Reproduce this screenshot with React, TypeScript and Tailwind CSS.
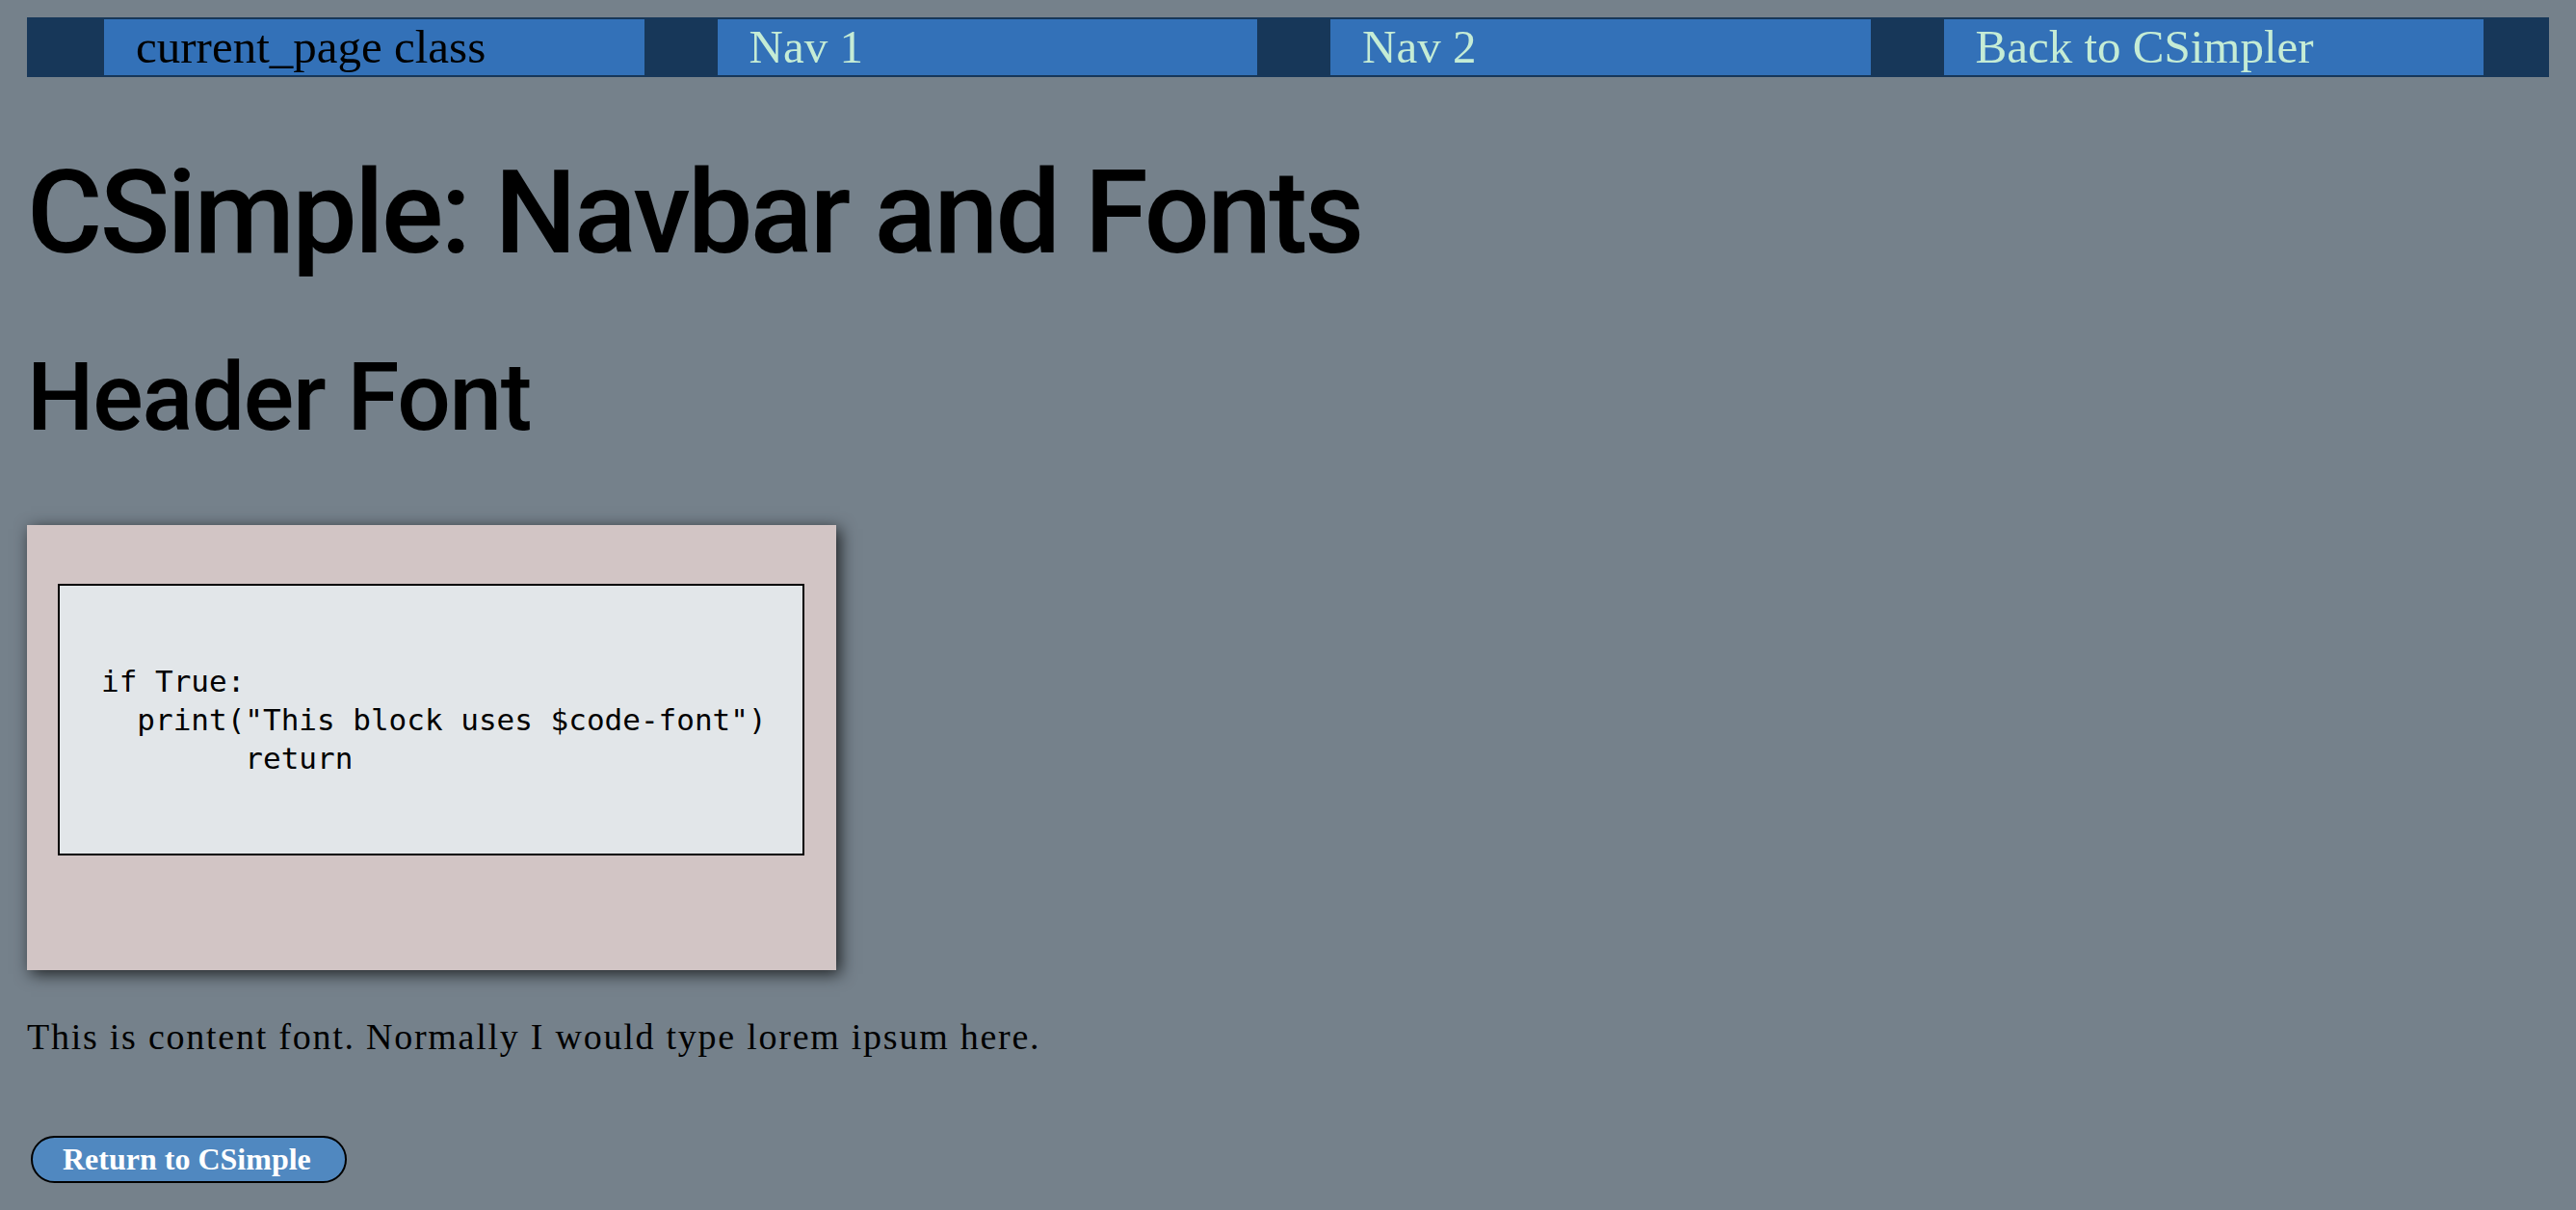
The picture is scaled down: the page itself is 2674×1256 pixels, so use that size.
const navItems = [
  { label: 'current_page class', current: true },
  { label: 'Nav 1', current: false },
  { label: 'Nav 2', current: false },
  { label: 'Back to CSimpler', current: false },
];

const code = `if True:
  print("This block uses $code-font")
        return`;

export default function App() {
  return (
    <div className="min-h-[1256px] bg-[#75818b] px-[28px] pt-[18px]">
      <nav className="flex gap-[76px] border-t-2 border-b-2 border-[#173759] bg-[#173759] pl-[80px] pr-[68px]">
        {navItems.map((item) => (
          <a
            key={item.label}
            href="#"
            className={`flex-1 bg-[#3371b8] pl-[33px] font-['Liberation_Serif',serif] text-[49px] leading-[58px] ${
              item.current ? 'text-black' : 'text-[#c5ecd5]'
            }`}
          >
            {item.label}
          </a>
        ))}
      </nav>

      <h1 className="mt-[71px] font-['Roboto',sans-serif] text-[120px] leading-[140px] font-medium tracking-[-2.7px] text-black">
        CSimple: Navbar and Fonts
      </h1>
      <h2 className="mt-[64px] font-['Roboto',sans-serif] text-[98px] leading-[115px] font-medium tracking-[-1.3px] text-black">
        Header Font
      </h2>

      <div className="mt-[75px] w-[840px] bg-[#d2c5c5] pt-[61px] pb-[119px] pl-[32px] pr-[33px] shadow-[4px_4px_16px_rgba(0,0,0,0.75)]">
        <pre className="border-2 border-black bg-[#e2e6e9] px-[43px] py-[79px] font-['DejaVu_Sans_Mono',monospace] text-[31px] leading-[40px] text-black">
          {code}
        </pre>
      </div>

      <p className="mt-[47px] font-['Liberation_Serif',serif] text-[38px] leading-[44px] tracking-[1.75px] text-black">
        This is content font. Normally I would type lorem ipsum here.
      </p>

      <button className="mt-[81px] ml-[4px] h-[49px] w-[328px] rounded-full border-2 border-black bg-[#5088c0] pl-[31px] text-left font-['Liberation_Serif',serif] text-[32px] leading-[45px] font-bold text-white">
        Return to CSimple
      </button>
    </div>
  );
}
